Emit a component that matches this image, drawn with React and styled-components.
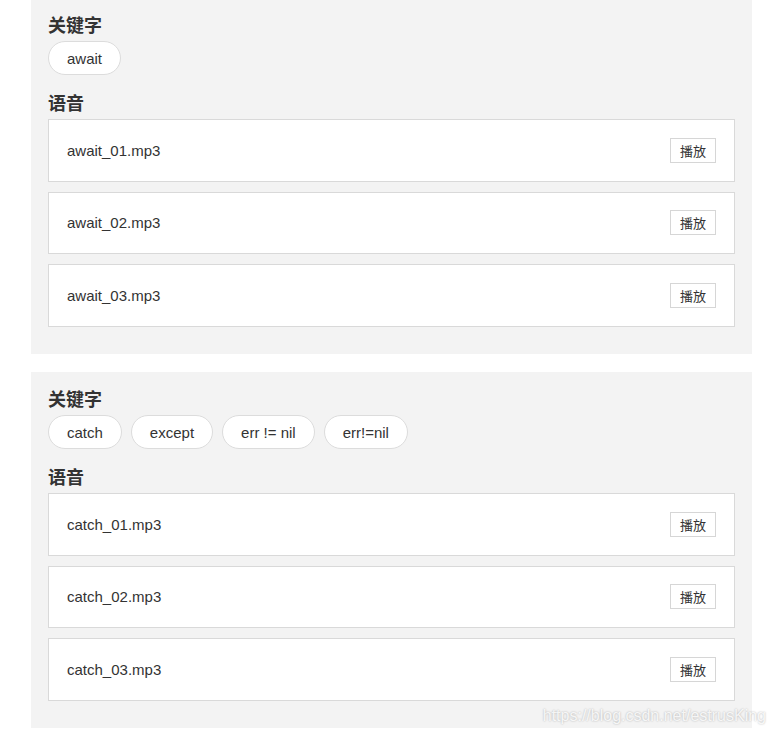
import styled, { createGlobalStyle } from 'styled-components';

const GlobalStyle = createGlobalStyle`
  body {
    margin: 0;
    background: #fff;
    font-family: "Liberation Sans", Arial, "Noto Sans CJK SC", sans-serif;
    color: #333;
  }
`;

const groups = [
  { keywords: ['await'], files: ['await_01.mp3', 'await_02.mp3', 'await_03.mp3'] },
  {
    keywords: ['catch', 'except', 'err != nil', 'err!=nil'],
    files: ['catch_01.mp3', 'catch_02.mp3', 'catch_03.mp3'],
  },
];

const App = () => {
  return (
    <Page>
      <GlobalStyle />
      {groups.map((g, i) => (
        <Panel key={i}>
          <Title>关键字</Title>
          <TagRow>
            {g.keywords.map((k) => (
              <Tag key={k}>{k}</Tag>
            ))}
          </TagRow>
          <Title $spaced>语音</Title>
          <FileList>
            {g.files.map((f) => (
              <FileCard key={f}>
                <span>{f}</span>
                <PlayButton>播放</PlayButton>
              </FileCard>
            ))}
          </FileList>
        </Panel>
      ))}
      <Watermark>https://blog.csdn.net/estrusKing</Watermark>
    </Page>
  );
};

const Page = styled.div`
  position: relative;
  width: 721px;
  margin: -2px 0 0 31px;
  display: flex;
  flex-direction: column;
  gap: 18px;
  height: 737px;
`;

const Panel = styled.section`
  background: #f3f3f3;
  padding: 14px 17px 27.5px 17px;
`;

const Title = styled.h3`
  margin: ${(p) => (p.$spaced ? '15px' : '0')} 0 5px;
  font-size: 18px;
  line-height: 24px;
  font-weight: 700;
  color: #333;
  font-family: "Noto Sans CJK SC", "Liberation Sans", sans-serif;
`;

const TagRow = styled.div`
  display: flex;
  gap: 9px;
`;

const Tag = styled.span`
  height: 34px;
  box-sizing: border-box;
  padding: 0 18px;
  border: 1px solid #dcdcdc;
  border-radius: 17px;
  background: #fff;
  display: flex;
  align-items: center;
  font-size: 15px;
  color: #333;
`;

const FileList = styled.div`
  display: flex;
  flex-direction: column;
  gap: 10px;
`;

const FileCard = styled.div`
  height: 62.5px;
  box-sizing: border-box;
  border: 1px solid #d9d9d9;
  background: #fff;
  padding: 0 18px;
  display: flex;
  align-items: center;
  justify-content: space-between;
  font-size: 15px;
  color: #333;
`;

const PlayButton = styled.button`
  width: 46px;
  height: 25px;
  box-sizing: border-box;
  border: 1px solid #d6d6d6;
  background: #fff;
  padding: 0;
  font-size: 13px;
  color: #333;
  font-family: "Noto Sans CJK SC", sans-serif;
  cursor: pointer;
`;

const Watermark = styled.div`
  position: absolute;
  right: -14px;
  top: 709px;
  font-size: 16px;
  color: rgba(255, 255, 255, 0.85);
  text-shadow: 0 0 2px rgba(0, 0, 0, 0.3);
  pointer-events: none;
`;

export default App;
